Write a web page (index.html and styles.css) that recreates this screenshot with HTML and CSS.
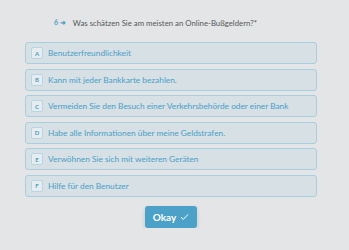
FILE: index.html
```html
<!DOCTYPE html>
<html lang="de">
<head>
    <meta charset="UTF-8">
    <title>Umfrage</title>
    <link rel="stylesheet" href="styles.css">
</head>
<body>
    <div class="survey">
        <div class="question">
            <span class="q-num">6 <span class="q-arrow">&#10140;</span></span>
            <span class="q-text">Was schätzen Sie am meisten an Online-Bußgeldern?*</span>
        </div>

        <div class="choices">
            <div class="choice"><span class="key">A</span>Benutzerfreundlichkeit</div>
            <div class="choice"><span class="key">B</span>Kann mit jeder Bankkarte bezahlen.</div>
            <div class="choice"><span class="key">C</span>Vermeiden Sie den Besuch einer Verkehrsbehörde oder einer Bank</div>
            <div class="choice"><span class="key">D</span>Habe alle Informationen über meine Geldstrafen.</div>
            <div class="choice"><span class="key">E</span>Verwöhnen Sie sich mit weiteren Geräten</div>
            <div class="choice"><span class="key">F</span>Hilfe für den Benutzer</div>
        </div>

        <button class="okay-btn">Okay
            <svg width="9" height="8" viewBox="0 0 9 8"><path d="M1 4.2 L3.3 6.4 L8 1.4" fill="none" stroke="#fff" stroke-width="1"/></svg>
        </button>
    </div>
</body>
</html>
```

FILE: styles.css
```css
body {
    margin: 0;
    background-color: #e3e5e6;
    font-family: Lato, "Open Sans", Arial, sans-serif;
}

.survey {
    width: 292px;
    padding: 16px 0 0 25px;
}

.question {
    display: flex;
    align-items: center;
    padding-left: 29px;
    height: 13px;
    font-size: 7.8px;
    color: #55585a;
}

.q-num {
    color: #4a9fc8;
    font-size: 7px;
    font-weight: bold;
    margin-right: 7px;
}

.q-arrow {
    font-size: 7px;
}

.choices {
    display: flex;
    flex-direction: column;
    gap: 4.5px;
    margin-top: 13px;
}

.choice {
    display: flex;
    align-items: center;
    height: 22px;
    box-sizing: border-box;
    padding-left: 5px;
    background-color: #d6e0e5;
    border: 1px solid #a8cfe1;
    border-radius: 3px;
    color: #4a9fc8;
    font-size: 8.3px;
}

.key {
    display: flex;
    align-items: center;
    justify-content: center;
    width: 12px;
    height: 12px;
    box-sizing: border-box;
    margin-right: 5px;
    background-color: #e6ecef;
    border: 1px solid #b5d6e5;
    border-radius: 2px;
    font-size: 6px;
    font-weight: bold;
}

.okay-btn {
    display: flex;
    align-items: center;
    gap: 4px;
    margin: 9px auto 0;
    height: 22px;
    padding: 0 8px;
    background-color: #4ca1c9;
    color: white;
    border: none;
    border-radius: 3px;
    font-family: Lato, Arial, sans-serif;
    font-size: 10px;
    font-weight: bold;
    box-shadow: 0 2px 4px rgba(0, 0, 0, 0.15);
}
```
